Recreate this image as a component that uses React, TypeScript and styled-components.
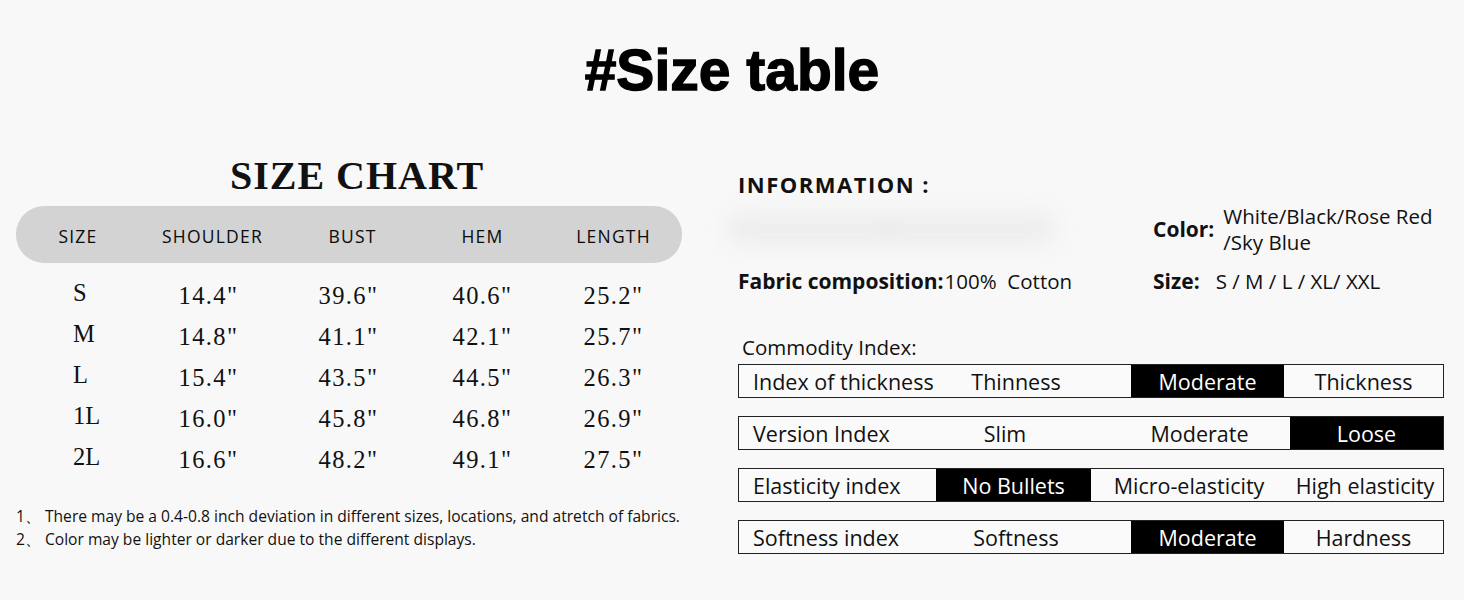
import { FC } from "react";
import styled, { createGlobalStyle } from "styled-components";

const GlobalStyle = createGlobalStyle`
    body {
        margin: 0;
        background: #f8f8f8;
        font-family: "Open Sans", "Noto Sans", sans-serif;
        color: #111;
    }
`;

const sizeRows = [
    ["S", '14.4"', '39.6"', '40.6"', '25.2"'],
    ["M", '14.8"', '41.1"', '42.1"', '25.7"'],
    ["L", '15.4"', '43.5"', '44.5"', '26.3"'],
    ["1L", '16.0"', '45.8"', '46.8"', '26.9"'],
    ["2L", '16.6"', '48.2"', '49.1"', '27.5"'],
];

type IndexCell = { text: string; active?: boolean };
const indexRows: { label: string; cols: string; cells: IndexCell[] }[] = [
    {
        label: "Index of thickness",
        cols: "162px 230px 153px 1fr",
        cells: [{ text: "Thinness" }, { text: "Moderate", active: true }, { text: "Thickness" }],
    },
    {
        label: "Version Index",
        cols: "162px 208px 181px 1fr",
        cells: [{ text: "Slim" }, { text: "Moderate" }, { text: "Loose", active: true }],
    },
    {
        label: "Elasticity index",
        cols: "197px 155px 196px 1fr",
        cells: [{ text: "No Bullets", active: true }, { text: "Micro-elasticity" }, { text: "High elasticity" }],
    },
    {
        label: "Softness index",
        cols: "162px 230px 153px 1fr",
        cells: [{ text: "Softness" }, { text: "Moderate", active: true }, { text: "Hardness" }],
    },
];

const App: FC = () => {
    return (
        <>
            <GlobalStyle />
            <Page>
                <Title>#Size table</Title>
                <Columns>
                    <LeftPanel>
                        <ChartTitle>SIZE CHART</ChartTitle>
                        <HeaderBar>
                            <HeadCell>SIZE</HeadCell>
                            <HeadCell>SHOULDER</HeadCell>
                            <HeadCell>BUST</HeadCell>
                            <HeadCell>HEM</HeadCell>
                            <HeadCell>LENGTH</HeadCell>
                        </HeaderBar>
                        <SizeBody>
                            {sizeRows.map((row) => (
                                <SizeRow key={row[0]}>
                                    {row.map((v, i) => (
                                        <SizeCell key={i} first={i === 0}>{v}</SizeCell>
                                    ))}
                                </SizeRow>
                            ))}
                        </SizeBody>
                        <Notes>
                            <Note>1、 There may be a 0.4-0.8 inch deviation in different sizes, locations, and atretch of fabrics.</Note>
                            <Note>2、 Color may be lighter or darker due to the different displays.</Note>
                        </Notes>
                    </LeftPanel>

                    <RightPanel>
                        <InfoTitle>INFORMATION :</InfoTitle>
                        <InfoGrid>
                            <Smudge>
                                <SmudgeDot />
                            </Smudge>
                            <InfoItem gap={9}>
                                <Key>Color:</Key>
                                <Value>White/Black/Rose Red<br />/Sky Blue</Value>
                            </InfoItem>
                            <InfoItem gap={1}>
                                <Key>Fabric composition:</Key>
                                <Value>100%&nbsp; Cotton</Value>
                            </InfoItem>
                            <InfoItem gap={16}>
                                <Key>Size:</Key>
                                <Value>S / M / L / XL/ XXL</Value>
                            </InfoItem>
                        </InfoGrid>
                        <CommodityLabel>Commodity Index:</CommodityLabel>
                        <IndexList>
                            {indexRows.map((r) => (
                                <IndexRow key={r.label} cols={r.cols}>
                                    <IndexLabel>{r.label}</IndexLabel>
                                    {r.cells.map((c) => (
                                        <IndexValue key={c.text} active={c.active}>{c.text}</IndexValue>
                                    ))}
                                </IndexRow>
                            ))}
                        </IndexList>
                    </RightPanel>
                </Columns>
            </Page>
        </>
    );
};

const Page = styled.div`
    width: 1464px;
    height: 600px;
    display: flex;
    flex-direction: column;
    overflow: hidden;
`;

const Title = styled.div`
    text-align: center;
    font-family: "Liberation Sans", Arial, sans-serif;
    font-weight: 700;
    font-size: 57px;
    line-height: 60px;
    padding-top: 40px;
    color: #000;
    -webkit-text-stroke: 1.3px #000;
`;

const Columns = styled.div`
    display: flex;
    gap: 56px;
    padding: 54px 0 0 16px;
`;

const LeftPanel = styled.div`
    width: 666px;
    display: flex;
    flex-direction: column;
`;

const ChartTitle = styled.div`
    text-align: center;
    font-family: "Liberation Serif", "Times New Roman", serif;
    font-weight: 700;
    font-size: 40px;
    line-height: 44px;
    letter-spacing: 1px;
    color: #111;
    margin-left: 16px;
`;

const HeaderBar = styled.div`
    margin-top: 8px;
    height: 57px;
    background: #d3d3d3;
    border-radius: 28px;
    display: grid;
    grid-template-columns: 124px 145px 135px 125px 1fr;
    align-items: center;
`;

const HeadCell = styled.div`
    text-align: center;
    font-size: 17.5px;
    font-weight: 500;
    letter-spacing: 1.2px;
    color: #0a0a0a;
    padding-top: 2px;
`;

const SizeBody = styled.div`
    margin-top: 11px;
    display: flex;
    flex-direction: column;
`;

const SizeRow = styled.div`
    height: 41px;
    display: grid;
    grid-template-columns: 124px 137px 143px 125px 1fr;
    align-items: center;
`;

const SizeCell = styled.div<{ first?: boolean }>`
    font-family: "Liberation Serif", "Times New Roman", serif;
    font-size: 24.5px;
    letter-spacing: ${(p) => (p.first ? "0" : "1.4px")};
    color: #111;
    text-align: ${(p) => (p.first ? "left" : "center")};
    padding-left: ${(p) => (p.first ? "57px" : "0")};
    margin-top: ${(p) => (p.first ? "-4px" : "2px")};
`;

const Notes = styled.div`
    margin-top: 26px;
    display: flex;
    flex-direction: column;
`;

const Note = styled.div`
    font-size: 15.6px;
    line-height: 23px;
    color: #111;
    white-space: nowrap;
`;

const RightPanel = styled.div`
    width: 706px;
    display: flex;
    flex-direction: column;
    padding-top: 16px;
`;

const InfoTitle = styled.div`
    font-weight: 700;
    font-size: 22px;
    letter-spacing: 1.5px;
    line-height: 28px;
    color: #111;
`;

const InfoGrid = styled.div`
    display: grid;
    grid-template-columns: 415px 1fr;
    grid-template-rows: 62px 42px;
    align-items: center;
`;

const Smudge = styled.div`
    position: relative;
    width: 330px;
    height: 34px;
    margin-left: -12px;
    background: #eeeeee;
    border-radius: 20px;
    filter: blur(9px);
`;

const SmudgeDot = styled.div`
    position: absolute;
    left: 160px;
    top: 18px;
    width: 4px;
    height: 3px;
    background: #888;
    border-radius: 50%;
`;

const InfoItem = styled.div<{ gap: number }>`
    display: flex;
    align-items: center;
    gap: ${(p) => p.gap}px;
`;

const Key = styled.span`
    font-weight: 700;
    font-size: 21px;
    color: #111;
`;

const Value = styled.span`
    font-size: 20.5px;
    line-height: 26px;
    color: #111;
`;

const CommodityLabel = styled.div`
    margin-top: 32px;
    padding-left: 4px;
    font-size: 20.5px;
    line-height: 26px;
    color: #111;
`;

const IndexList = styled.div`
    display: flex;
    flex-direction: column;
    gap: 18px;
    margin-top: 4px;
`;

const IndexRow = styled.div<{ cols: string }>`
    height: 34px;
    box-sizing: border-box;
    border: 1.5px solid #222;
    display: grid;
    grid-template-columns: ${(p) => p.cols};
    align-items: stretch;
    background: #fafafa;
`;

const IndexLabel = styled.div`
    display: flex;
    align-items: center;
    padding-left: 14px;
    font-size: 21.5px;
    color: #111;
    white-space: nowrap;
`;

const IndexValue = styled.div<{ active?: boolean }>`
    display: flex;
    align-items: center;
    justify-content: center;
    font-size: 21.5px;
    white-space: nowrap;
    background: ${(p) => (p.active ? "#000" : "transparent")};
    color: ${(p) => (p.active ? "#fff" : "#111")};
`;

export default App;
